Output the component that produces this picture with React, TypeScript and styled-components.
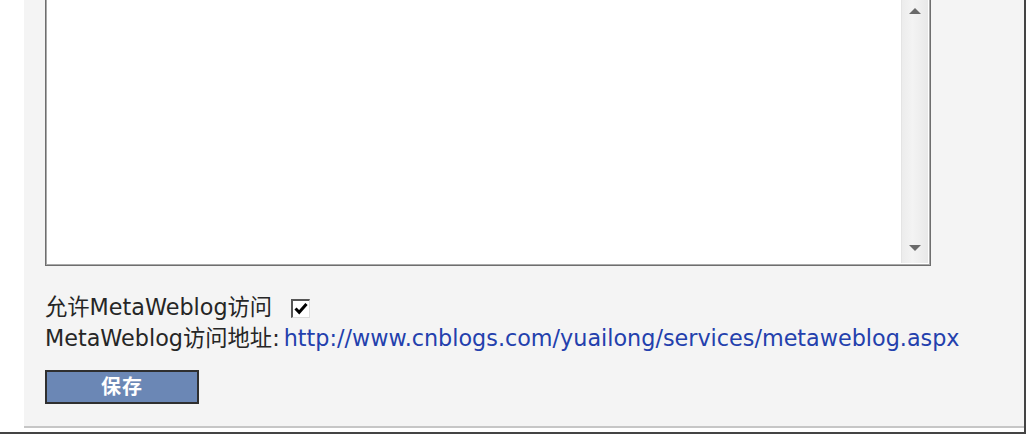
import React from "react";
import styled, { createGlobalStyle } from "styled-components";

const Global = createGlobalStyle`
  html, body { margin: 0; padding: 0; background: #ffffff; }
  body { font-family: "DejaVu Sans", Verdana, "Noto Sans CJK SC", sans-serif; }
`;

const Shot = styled.div`
  width: 1026px;
  height: 434px;
  box-sizing: border-box;
  padding: 0 0 4px 24px;
  background: #ffffff;
  border-right: 2px solid #444444;
  border-bottom: 2px solid #444444;
  display: flex;
`;

const Panel = styled.div`
  flex: 1;
  background: #f4f4f4;
  border-bottom: 2px solid #c6c6c6;
  padding: 0 0 0 21px;
  display: flex;
  flex-direction: column;
  align-items: flex-start;
`;

const TextArea = styled.div`
  width: 886px;
  height: 266px;
  box-sizing: border-box;
  background: #ffffff;
  border: 1px solid #6e6e6e;
  border-top: none;
  box-shadow: inset 1px 0 0 #a9a9a9, inset -1px -1px 0 #a9a9a9;
  display: flex;
  justify-content: flex-end;
  padding: 0 2px 2px 0;
`;

const ScrollBar = styled.div`
  width: 27px;
  display: flex;
  flex-direction: column;
  justify-content: space-between;
  align-items: center;
  background: linear-gradient(to right, #ececec 0%, #f3f3f3 40%, #eeeeee 70%, #e8e8e8 100%);
  border-left: 1px solid #e4e4e4;
  padding: 8px 0 12px;
  box-sizing: border-box;
`;

const Arrow = styled.div<{ $down?: boolean }>`
  width: 0;
  height: 0;
  border-left: 6px solid transparent;
  border-right: 6px solid transparent;
  ${(p) =>
    p.$down
      ? "border-top: 6px solid #6a6a6a;"
      : "border-bottom: 6px solid #6a6a6a;"}
  filter: blur(0.4px);
`;

const Lines = styled.div`
  margin-top: 26px;
  display: flex;
  flex-direction: column;
  font-size: 22.3px;
  line-height: 31px;
  color: #262626;
`;

const Row = styled.div`
  display: flex;
  align-items: center;
  white-space: nowrap;
`;

const Check = styled.span`
  margin-left: 19px;
  width: 19px;
  height: 19px;
  box-sizing: border-box;
  background: #ffffff;
  border-top: 2px solid #555555;
  border-left: 2px solid #555555;
  border-right: 1px solid #dcdcdc;
  border-bottom: 1px solid #dcdcdc;
  display: flex;
  align-items: center;
  justify-content: center;
  margin-top: 1px;
`;

const Link = styled.a`
  color: #2340ad;
  text-decoration: none;
  margin-left: 4px;
`;

const SaveButton = styled.button`
  margin-top: 16px;
  width: 154px;
  height: 34px;
  background: #6b87b5;
  border: 2px solid #2f2f2f;
  color: #ffffff;
  font-family: "Noto Sans CJK SC", sans-serif;
  font-weight: 700;
  font-size: 20px;
  line-height: 1;
  padding: 0 0 2px;
  letter-spacing: 1px;
`;

export default function App() {
  return (
    <>
      <Global />
      <Shot>
        <Panel>
          <TextArea>
            <ScrollBar>
              <Arrow />
              <Arrow $down />
            </ScrollBar>
          </TextArea>
          <Lines>
            <Row>
              允许MetaWeblog访问
              <Check>
                <svg width="14" height="13" viewBox="0 0 14 13">
                  <path d="M1.5 6.5 L5.2 10.2 L12.5 2" fill="none" stroke="#000" strokeWidth="3" />
                </svg>
              </Check>
            </Row>
            <Row>
              MetaWeblog访问地址:
              <Link href="#">http://www.cnblogs.com/yuailong/services/metaweblog.aspx</Link>
            </Row>
          </Lines>
          <SaveButton>保存</SaveButton>
        </Panel>
      </Shot>
    </>
  );
}
